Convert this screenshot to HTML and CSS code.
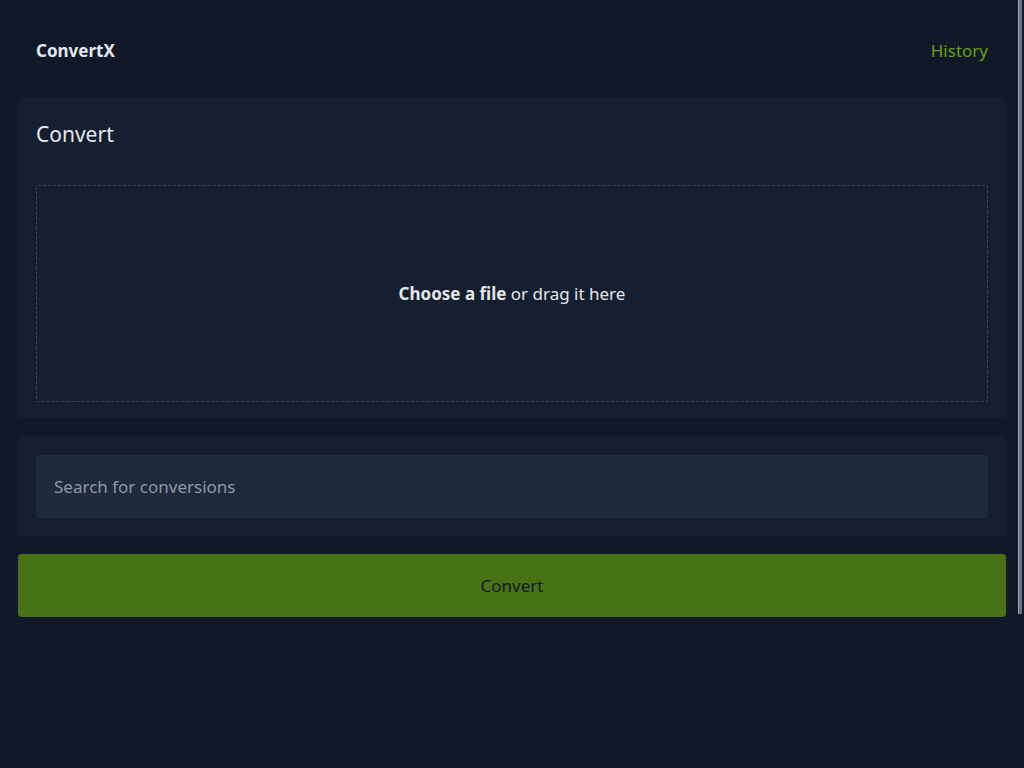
FILE: index.html
```html
<!DOCTYPE html>
<html lang="en">
<head>
<meta charset="utf-8">
<title>ConvertX</title>
<link rel="stylesheet" href="styles.css">
</head>
<body>
<div class="page">
  <header class="header">
    <nav class="nav">
      <a class="brand" href="#">ConvertX</a>
      <a class="history" href="#">History</a>
    </nav>
  </header>
  <main class="main">
    <section class="card">
      <h1 class="card-title">Convert</h1>
      <div class="dropzone">
        <span><b>Choose a file</b> or drag it here</span>
      </div>
    </section>
    <section class="card card-search">
      <input class="search" type="search" placeholder="Search for conversions">
    </section>
    <button class="convert-btn" type="button">Convert</button>
  </main>
</div>
<div class="scroll-thumb"></div>
</body>
</html>
```

FILE: styles.css
```css
* { box-sizing: border-box; }
html { background: #111827; scrollbar-width: none; }
html::-webkit-scrollbar { display: none; }
body {
  margin: 0;
  background: #111827;
  color: #e5e7eb;
  font-family: "Noto Sans", "Open Sans", sans-serif;
  font-size: 17px;
  min-height: 960px;
}
.page { padding: 0 18px; }
.header { height: 98px; display: flex; align-items: center; padding-top: 2px; }
.nav {
  flex: 1;
  display: flex;
  justify-content: space-between;
  align-items: center;
  padding: 0 18px;
}
.brand {
  color: #e5e7eb;
  font-weight: 700;
  font-size: 17px;
  text-decoration: none;
}
.history {
  color: #65a30d;
  font-size: 17px;
  text-decoration: none;
}
.main { display: flex; flex-direction: column; gap: 18px; }
.card {
  background: #161f2f;
  border-radius: 4px;
  padding: 20px 18px 16px;
}
.card-title {
  margin: 0 0 35px;
  font-size: 21px;
  font-weight: 400;
  line-height: 32px;
  color: #e5e7eb;
}
.dropzone {
  height: 217px;
  border: 1px dashed #3b4556;
  border-radius: 2px;
  display: flex;
  align-items: center;
  justify-content: center;
  color: #e5e7eb;
}
.dropzone b { font-weight: 700; }
.card-search { padding: 19px 18px 18px; }
.search {
  display: block;
  width: 100%;
  height: 63px;
  border: none;
  border-radius: 4px;
  background: #1f2a3b;
  padding: 0 18px;
  font-family: inherit;
  font-size: 17px;
  color: #e5e7eb;
  outline: none;
}
.search::placeholder { color: #8f98a6; }
.convert-btn {
  height: 63px;
  border: none;
  border-radius: 4px;
  background: #487216;
  color: #111827;
  font-family: inherit;
  font-size: 17px;
}
.scroll-thumb {
  position: fixed;
  top: 0;
  right: 2px;
  width: 4px;
  height: 614px;
  background: #6b7280;
  border-left: 1px solid #9ca3af;
}
```
